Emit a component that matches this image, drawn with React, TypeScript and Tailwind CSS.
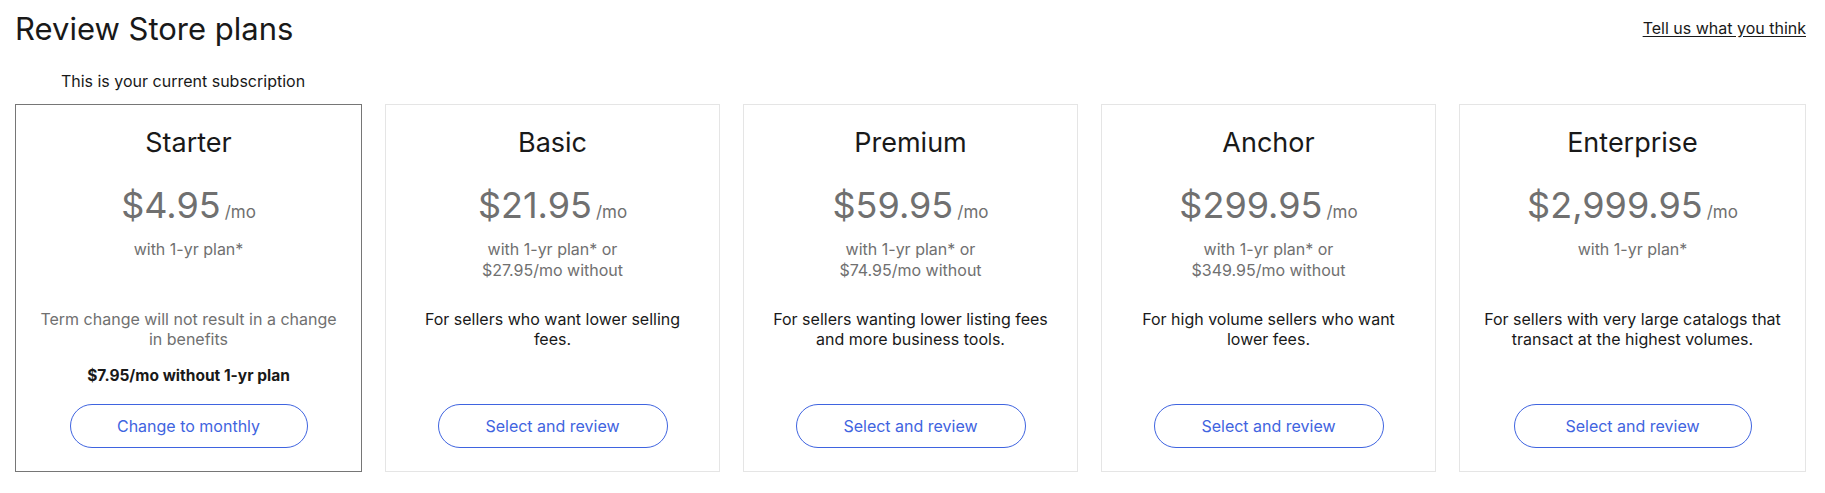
import React from "react";

type Plan = {
  name: string;
  price: string;
  sub: string[];
  desc: string[];
  current?: boolean;
  wide?: boolean;
  extra?: string;
  cta: string;
};

const plans: Plan[] = [
  {
    name: "Starter",
    price: "$4.95",
    sub: ["with 1-yr plan*"],
    desc: ["Term change will not result in a change", "in benefits"],
    current: true,
    wide: true,
    extra: "$7.95/mo without 1-yr plan",
    cta: "Change to monthly",
  },
  {
    name: "Basic",
    price: "$21.95",
    sub: ["with 1-yr plan* or", "$27.95/mo without"],
    desc: ["For sellers who want lower selling", "fees."],
    cta: "Select and review",
  },
  {
    name: "Premium",
    price: "$59.95",
    sub: ["with 1-yr plan* or", "$74.95/mo without"],
    desc: ["For sellers wanting lower listing fees", "and more business tools."],
    cta: "Select and review",
  },
  {
    name: "Anchor",
    price: "$299.95",
    sub: ["with 1-yr plan* or", "$349.95/mo without"],
    desc: ["For high volume sellers who want", "lower fees."],
    cta: "Select and review",
  },
  {
    name: "Enterprise",
    price: "$2,999.95",
    sub: ["with 1-yr plan*"],
    desc: ["For sellers with very large catalogs that", "transact at the highest volumes."],
    wide: true,
    cta: "Select and review",
  },
];

function Card({ p }: { p: Plan }) {
  return (
    <div
      className={
        "flex h-[368px] flex-col items-center bg-white pt-[22px] text-center " +
        (p.current ? "border border-[#767676]" : "border border-[#e5e5e5]")
      }
    >
      <h2 className="text-[27px] leading-[32px] font-normal text-[#191919]">{p.name}</h2>
      <div className="mt-[26px] flex items-baseline text-[#707070]">
        <span className="text-[36px] leading-[40px]">{p.price}</span>
        <span className="ml-[4px] text-[17px] leading-[20px]">/mo</span>
      </div>
      <div className="mt-[14px] h-[42px] text-[16px] leading-[21px] text-[#707070]">
        {p.sub.map((s) => (
          <div key={s} className="whitespace-nowrap">
            {s}
          </div>
        ))}
      </div>
      <div
        className={
          "mt-[28px] text-[16px] leading-[20px] " +
          (p.current ? "text-[#707070]" : "text-[#191919]")
        }
      >
        {p.desc.map((d) => (
          <div key={d} className="whitespace-nowrap">
            {d}
          </div>
        ))}
      </div>
      {p.extra && (
        <div className="mt-[17px] text-[15.5px] leading-[20px] font-bold text-[#191919]">{p.extra}</div>
      )}
      <button
        className={
          "mt-auto mb-[23px] h-[44px] rounded-full border border-[#3f64e0] bg-white text-[16px] text-[#3f64e0] " +
          (p.wide ? "w-[238px]" : "w-[230px]")
        }
      >
        {p.cta}
      </button>
    </div>
  );
}

export default function App() {
  return (
    <div
      className="min-h-[493px] bg-white pl-[15px] pr-[19px] text-[#191919]"
      style={{ fontFamily: "Inter, 'Liberation Sans', Arial, sans-serif" }}
    >
      <div className="flex items-start justify-between pt-[11px]">
        <h1 className="text-[31px] leading-[36px] font-normal">Review Store plans</h1>
        <a href="#" className="mt-[7px] text-[16px] leading-[20px] text-[#191919] underline underline-offset-2">
          Tell us what you think
        </a>
      </div>
      <div className="mt-[24px] w-[336px] text-center text-[16px] leading-[20px] text-[#191919]">
        This is your current subscription
      </div>
      <div className="mt-[13px] grid grid-cols-[347px_335px_335px_335px_347px] gap-[23px]">
        {plans.map((p) => (
          <Card key={p.name} p={p} />
        ))}
      </div>
    </div>
  );
}
